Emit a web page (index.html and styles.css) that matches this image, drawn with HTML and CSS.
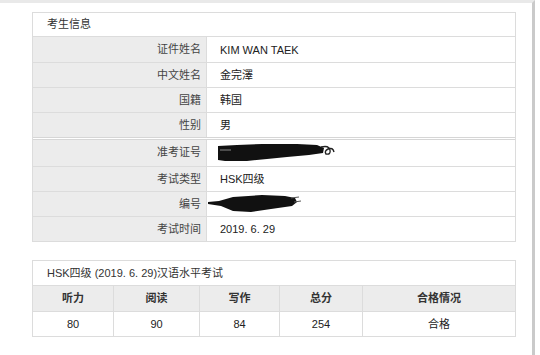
FILE: index.html
```html
<!DOCTYPE html>
<html lang="zh-CN">
<head>
    <meta charset="UTF-8">
    <meta name="viewport" content="width=device-width, initial-scale=1.0">
    <title>考生信息</title>
    <link rel="stylesheet" href="styles.css">
</head>
<body>
    <div class="page">
        <section class="card">
            <div class="card-title">考生信息</div>

            <div class="info-row first">
                <div class="info-label">证件姓名</div>
                <div class="info-value">KIM WAN TAEK</div>
            </div>
            <div class="info-row">
                <div class="info-label">中文姓名</div>
                <div class="info-value">金完澤</div>
            </div>
            <div class="info-row">
                <div class="info-label">国籍</div>
                <div class="info-value">韩国</div>
            </div>
            <div class="info-row">
                <div class="info-label">性别</div>
                <div class="info-value">男</div>
            </div>

            <div class="info-row split">
                <div class="info-label">准考证号</div>
                <div class="info-value">
                    <!-- number is blacked out -->
                    <svg class="redact" width="122" height="22" viewBox="0 0 122 22">
                        <path d="M1 4 L20 3 L45 2 L80 2 L100 3 L107 6 L106 11 L92 13 L70 15 L50 17 L30 19 L8 19 L1 18 Z" fill="#111"/>
                        <path d="M3 8 L14 8" stroke="#888" stroke-width="1"/>
                        <path d="M104 5 Q112 3 113 8 Q114 13 109 12 Q107 9 111 7 Q116 5 117 10" stroke="#222" stroke-width="1.4" fill="none"/>
                    </svg>
                </div>
            </div>
            <div class="info-row">
                <div class="info-label">考试类型</div>
                <div class="info-value">HSK四级</div>
            </div>
            <div class="info-row">
                <div class="info-label">编号</div>
                <div class="info-value">
                    <svg class="redact wide" width="96" height="20" viewBox="0 0 96 20">
                        <path d="M1 8 L12 7 L26 3 L55 1 L78 2 L88 4 L90 8 L85 12 L64 15 L44 18 L26 17 L14 12 L1 10 Z" fill="#111"/>
                        <path d="M84 4 L92 3 M87 8 L94 7" stroke="#555" stroke-width="1"/>
                    </svg>
                </div>
            </div>
            <div class="info-row last">
                <div class="info-label">考试时间</div>
                <div class="info-value">2019. 6. 29</div>
            </div>
        </section>

        <section class="card score-card">
            <div class="card-title">HSK四级 (2019. 6. 29)汉语水平考试</div>
            <div class="score-row score-head">
                <div>听力</div>
                <div>阅读</div>
                <div>写作</div>
                <div>总分</div>
                <div>合格情况</div>
            </div>
            <div class="score-row">
                <div>80</div>
                <div>90</div>
                <div>84</div>
                <div>254</div>
                <div>合格</div>
            </div>
        </section>
    </div>
</body>
</html>
```

FILE: styles.css
```css
body {
    margin: 0;
    font-family: "Liberation Sans", "Noto Sans CJK SC", sans-serif;
    font-size: 11px;
    color: #333;
    background: #fff;
}
.page {
    width: 535px;
    height: 355px;
    box-sizing: border-box;
    border-top: 3px solid #e9e9e9;
    border-right: 3px solid #cacaca;
    padding: 9px 16px 0 32px;
}
.card {
    border: 1px solid #dcdcdc;
    background: #fff;
}
.card-title {
    height: 23px;
    line-height: 23px;
    padding-left: 14px;
    color: #333;
}
.info-row {
    display: grid;
    grid-template-columns: 173px 1fr;
    height: 25px;
    box-sizing: border-box;
    border-top: 1px solid #dcdcdc;
}
.info-row.first {
    height: 26px;
}
.info-row.split {
    height: 29px;
    border-top: 3px double #d6d6d6;
}
.info-label {
    background: #ececec;
    text-align: right;
    padding-right: 5px;
    line-height: 24px;
    color: #444;
}
.info-value {
    border-left: 1px solid #dcdcdc;
    padding-left: 13px;
    line-height: 24px;
    color: #222;
    display: flex;
    align-items: center;
}
.redact {
    display: block;
    flex: none;
    margin-left: -3px;
}
.redact.wide {
    margin-left: -13px;
}
.score-card {
    margin-top: 18px;
}
.score-card .card-title {
    height: 24px;
    line-height: 24px;
}
.score-row {
    display: grid;
    grid-template-columns: 80px 86px 80px 83px 1fr;
    height: 25px;
    box-sizing: border-box;
    border-top: 1px solid #dcdcdc;
    text-align: center;
    line-height: 24px;
    color: #222;
}
.score-row > div + div {
    border-left: 1px solid #dcdcdc;
}
.score-head {
    height: 26px;
    background: #ececec;
    font-weight: bold;
    line-height: 25px;
    color: #333;
}
```
